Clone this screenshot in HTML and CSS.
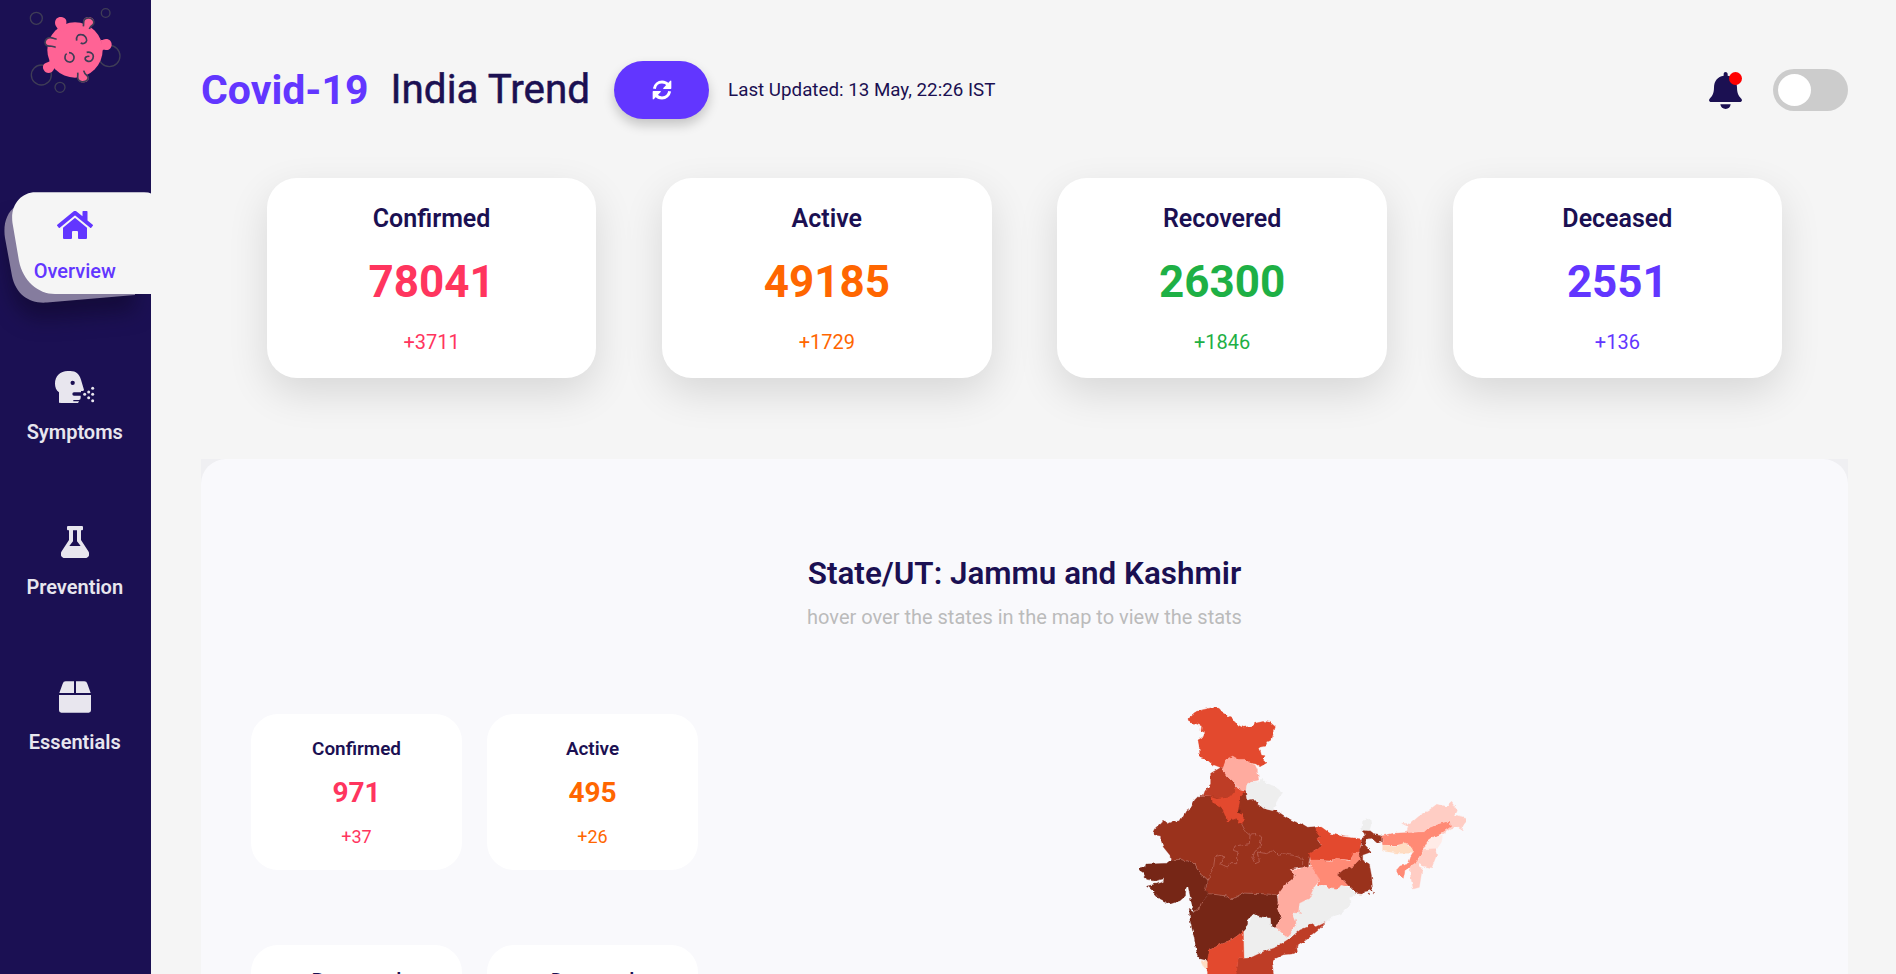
FILE: index.html
```html
<!DOCTYPE html>
<html lang="en">
<head>
<meta charset="utf-8">
<title>Covid-19 India Trend</title>
<link rel="stylesheet" href="styles.css">
</head>
<body>
<div class="app">
  <aside class="sidebar">
    <svg class="logo" viewBox="0 0 453 300" width="151" height="100">
      <g class="ring"><circle cx="109" cy="55" r="18"/><circle cx="317" cy="39" r="13"/><circle cx="328" cy="168" r="32"/><circle cx="124" cy="225" r="30"/><circle cx="180" cy="262" r="15"/></g>
      <g class="virus">
        <circle cx="225" cy="150" r="83"/>
        <path d="M174 88c-2-6-9-10-9-19 0-12 8-19 19-18 11 1 17 9 15 18-1 5 0 8 4 12l-16 14z"/>
        <path d="M250 75c2-8-2-12 3-19 6-7 17-6 24-1 7 6 7 14 1 20-4 4-7 6-9 12z"/>
        <path d="M303 120c6 1 8-3 15-3 11 0 18 8 17 18s-9 17-18 15c-6-1-8-1-13 3z"/>
        <path d="M165 117c-7 0-10-4-17-3-9 1-14 8-13 16 1 7 8 10 14 9 6 0 12 2 17 3z"/>
        <path d="M150 180c-1 6-5 6-11 8-9 3-13 12-8 21 5 10 15 12 24 7 7-4 6-13 12-12z"/>
        <path d="M233 218c2 8-1 12 1 20 3 9 13 11 23 8 9-3 12-13 6-19-6-4-10-7-12-15z"/>
      </g>
      <g class="detail">
        <path d="M250 79c2-8-1-14 3-20 5-7 18-7 24-1 6 5 6 13 1 17-5 3-9 6-10 12"/>
        <path d="M170 117c-9 1-11-5-20-4-8 0-15 7-15 15 1 8 8 11 15 10 6 0 10 2 17 4"/>
        <path d="M233 218c2 9-2 12 1 19 3 9 15 10 22 7 8-3 11-11 6-16-5-4-9-7-11-16"/>
        <path d="M230 122c-2-14 5-19 14-18 10 0 17 10 16 18-2 8-11 11-18 7"/>
        <path d="M207 158c9 0 16 7 15 16-1 8-7 13-14 12-9-1-14-8-13-15 0-5 2-8 5-10"/>
        <path d="M260 157c11-2 20 3 20 12 0 10-8 17-16 15-9-2-11-9-6-13 4-2 8-3 10-1"/>
      </g>
    </svg>
    <nav class="nav">
      <a class="nav-item active">
        <svg class="tab" viewBox="0 180 151 150" width="151" height="150">
          <path class="tab-back" d="M16 206C6 213 3 225 5 238L12 276C16 295 30 304 47 302.500L135 295V206Z"/>
          <path class="tab-front" d="M151 193.500Q149 192.300 144 192.300H36C21 192 10 205 12.500 223L19 261C23 281 38 294 55 294H151Z"/>
        </svg>
        <svg class="nav-icon home" viewBox="0 32 576 448" width="36" height="28"><path d="M280 148L96 300v164a16 16 0 0 0 16 16l112-.3a16 16 0 0 0 16-16V368a16 16 0 0 1 16-16h64a16 16 0 0 1 16 16v95.600a16 16 0 0 0 16 16.100L464 480a16 16 0 0 0 16-16V300L295.700 148.300a12.200 12.200 0 0 0-15.300 0zM571.600 251.500L488 182.600V44a12 12 0 0 0-12-12h-56a12 12 0 0 0-12 12v72.600L318.500 43a48 48 0 0 0-61 0L4.300 251.500a12 12 0 0 0-1.600 16.900l25.500 31A12 12 0 0 0 45.200 301l235.200-193.700a12.200 12.200 0 0 1 15.300 0L530.900 301a12 12 0 0 0 16.900-1.600l25.500-31a12 12 0 0 0-1.700-16.900z"/></svg>
        <span>Overview</span>
      </a>
      <a class="nav-item">
        <svg class="nav-icon" viewBox="0 0 120 96" width="40" height="32"><path fill-rule="evenodd" d="M12 95V64C4 58 0 49 0 38 0 15 16 0 38 0h8c17 0 27 10 32 26l8 27c2 5 0 7-4 7h-4v4H57q-5 0-5 5t5 5h20v7q0 6-6 6H55v4h17q-1 5-7 6H54v4zM53 29a6.500 6.500 0 1 0 0 13 6.500 6.500 0 0 0 0-13z"/><g><circle cx="89" cy="70" r="4.500"/><circle cx="101" cy="63" r="4.500"/><circle cx="101" cy="80" r="4.500"/><circle cx="113" cy="52" r="4.500"/><circle cx="113" cy="70" r="4.500"/><circle cx="113" cy="89" r="4.500"/></g></svg>
        <span>Symptoms</span>
      </a>
      <a class="nav-item">
        <svg class="nav-icon" viewBox="0 0 84 96" width="28" height="32"><path fill-rule="evenodd" d="M21 0h42q3 0 3 3v7q0 3-3 3h-3v29l22 34c6 10 1 20-10 20H12C1 96-4 86 2 76l22-34V13h-3q-3 0-3-3V3q0-3 3-3zM36 13v33L25 60h34L48 46V13z"/></svg>
        <span>Prevention</span>
      </a>
      <a class="nav-item">
        <svg class="nav-icon" viewBox="0 0 96 96" width="32" height="32"><path d="M45 1v35H1L11 8q2-7 9-7zM51 1h25q7 0 9 7l10 28H51zM0 42h96v46q0 7-7 7H7q-7 0-7-7z"/></svg>
        <span>Essentials</span>
      </a>
    </nav>
  </aside>

  <main class="main">
    <header class="header">
      <h1 class="title"><span class="brand">Covid-19</span><span class="country">India Trend</span></h1>
      <button class="refresh" aria-label="Refresh">
        <svg viewBox="0 0 60 60" width="20" height="20"><path class="arc" d="M7 26C9 14 19 6 30 6c8 0 14 3 19 9M53 34C51 46 41 54 30 54c-8 0-14-3-19-9"/><path d="M58 4v21q0 2-2 2H35q-3 0-1-3L54 3q4-3 4 1zM2 56V35q0-2 2-2h21q3 0 1 3L6 57q-4 3-4-1z"/></svg>
      </button>
      <p class="updated">Last Updated: 13 May, 22:26 IST</p>
      <div class="bell">
        <svg viewBox="0 0 99 111" width="33" height="37"><path d="M44 11V5q0-5 5.500-5T56 5v6c18 3 28 16 28 35 0 17 4 26 13 34 4 5 1 10-5 10H7c-6 0-9-5-5-10 9-8 13-17 13-34 0-19 11-32 29-35zM34 97h31c-1 9-7 14-15 14s-15-5-16-14z"/></svg>
        <span class="dot"></span>
      </div>
      <div class="toggle"><span class="knob"></span></div>
    </header>

    <section class="totals">
      <article class="card red"><h2>Confirmed</h2><strong>78041</strong><small>+3711</small></article>
      <article class="card orange"><h2>Active</h2><strong>49185</strong><small>+1729</small></article>
      <article class="card green"><h2>Recovered</h2><strong>26300</strong><small>+1846</small></article>
      <article class="card violet"><h2>Deceased</h2><strong>2551</strong><small>+136</small></article>
    </section>

    <div class="panel-wrap">
    <section class="panel">
      <h2 class="state">State/UT: Jammu and Kashmir</h2>
      <p class="hint">hover over the states in the map to view the stats</p>
      <div class="detail-row">
        <div class="minis">
          <article class="mini red"><h3>Confirmed</h3><strong>971</strong><small>+37</small></article>
          <article class="mini orange"><h3>Active</h3><strong>495</strong><small>+26</small></article>
          <article class="mini green"><h3>Recovered</h3></article>
          <article class="mini violet"><h3>Deceased</h3></article>
        </div>
        <svg class="map" viewBox="0 0 1140 852" width="380" height="284">
          <defs><filter id="coast" x="0" y="0" width="100%" height="100%"><feTurbulence type="fractalNoise" baseFrequency="0.07" numOctaves="2" seed="4"/><feDisplacementMap in="SourceGraphic" scale="11" xChannelSelector="R" yChannelSelector="G"/></filter></defs>
          <g filter="url(#coast)">
          <path class="c6" d="M102 426L107 416 126 398 134 388 143 402 158 395 180 393 198 362 215 350 224 330 238 316 272 318 345 300 380 305 380 330 400 328 415 345 440 358 470 362 490 376 510 388 525 395 545 403 560 412 585 410 595 425 600 440 592 450 607 470 585 480 572 490 568 510 565 532 548 532 510 538 528 556 515 569 495 586 478 611 470 616 425 611 370 609 333 629 320 618 265 611 255 604 265 571 240 551 225 521 185 508 152 510 150 496 130 471 122 446 122 438 102 434Z"/>
          <path class="c7" d="M152 510L185 508 225 521 240 551 265 571 255 604 268 611 245 636 238 655 222 665 215 640 205 592 198 592 196 618 180 632 150 642 120 626 98 602 82 588 105 583 130 575 132 566 105 573 80 568 70 548 58 540 62 532 75 533 78 522 110 521 140 520Z"/>
          <path class="c7" d="M268 611L320 618 333 629 370 609 425 611 470 614 475 640 472 655 484 688 466 710 453 710 451 685 420 680 400 673 383 688 383 705 370 722 355 735 330 753 305 762 268 780 265 812 240 806 232 795 222 740 210 690 208 655 222 665 238 655 245 636Z"/>
          <path class="c0" d="M400 673L420 680 451 685 453 710 466 710 500 742 540 720 480 770 440 780 415 795 372 806 370 775 368 722 383 705Z"/>
          <path class="c0" d="M578 590L605 585 630 595 660 585 685 595 710 612 688 625 690 645 665 670 630 685 612 700 585 705 560 710 510 746 490 752 500 742 522 720 528 705 522 670 535 665 535 640 565 625Z"/>
          <path class="c3" d="M548 533L565 532 575 525 590 550 600 570 582 592 567 625 538 640 535 667 546 670 520 668 528 700 518 722 500 742 466 710 484 688 472 655 475 620 478 608 495 586 515 569 528 556 510 538 540 540Z"/>
          <path class="c5" d="M355 806L390 804 430 785 470 770 510 745 540 720 560 712 575 700 590 710 615 698 595 720 565 745 530 770 532 785 515 792 490 794 465 806 457 826 462 862 345 862Z"/>
          <path class="c4" d="M268 780L305 762 330 753 355 735 370 722 372 806 355 806 348 862 265 862 260 830 262 812Z"/>
          <path class="c8" d="M243 812L262 812 262 838 252 832Z"/>
          <path class="c4" d="M588 408L605 412 630 430 670 440 725 447 722 465 718 485 700 495 690 510 650 505 630 512 572 510 568 490 585 480 607 468 592 448 600 440 588 425Z"/>
          <path class="c2" d="M572 510L590 510 630 515 650 505 690 513 700 492 718 485 722 505 700 530 670 540 652 555 670 570 688 590 660 585 650 598 625 595 620 585 592 585 600 570 588 550 575 530 568 520Z"/>
          <path class="c6" d="M728 420L750 422 760 430 785 435 785 455 772 460 755 445 740 447 735 465 755 485 728 495 728 510 748 522 755 560 757 590 748 602 732 605 725 612 710 610 688 590 670 570 652 555 670 540 700 530 722 505 718 480 725 465 725 445 735 440Z"/>
          <path class="c0" d="M728 392L750 387 753 405 748 422 725 420Z"/>
          <path class="c2" d="M785 438L820 430 855 428 915 425 930 412 960 400 990 392 993 410 965 430 945 440 922 455 905 490 895 505 890 520 875 530 855 540 850 565 835 555 830 540 840 528 865 522 872 502 882 485 865 460 830 465 788 465Z"/>
          <path class="c8" d="M788 465L830 468 855 458 865 465 880 480 880 490 835 490 788 483Z"/>
          <path class="c1" d="M845 400L870 402 895 380 925 362 950 343 980 350 995 337 1012 362 1005 375 1038 383 1038 395 1025 412 1030 420 1015 410 993 415 970 432 965 430 993 410 990 392 960 400 930 412 915 425 860 427 865 410ZM912 480L945 475 950 495 935 533 910 528 892 520 898 502ZM870 530L890 515 898 530 907 535 903 560 898 592 880 597 872 560Z"/>
          <path class="c9" d="M922 455L945 438 967 435 965 455 950 478 910 480Z"/>
          <path class="c4" d="M204 85L225 67 245 60 275 53 297 55 310 70 335 83 347 100 370 112 395 108 405 100 432 94 450 97 466 110 460 130 455 148 440 155 435 168 418 172 424 195 435 197 430 208 441 218 420 230 408 222 375 215 345 205 318 212 310 234 300 232 275 222 265 212 240 203 238 170 234 150 250 140 255 128 243 122 245 108 225 100 210 98Z"/>
          <path class="c5" d="M300 234L310 236 320 258 335 272 350 288 345 302 330 322 290 325 272 318 250 316 255 303 272 282 272 250Z"/>
          <path class="c4" d="M272 320L290 327 330 322 345 303 350 288 360 300 375 305 362 320 357 345 353 365 370 375 370 395 355 400 350 385 335 390 322 395 315 375 303 350 280 338Z"/>
          <path class="c3" d="M318 208L338 198 355 208 378 208 390 220 405 225 412 240 416 270 395 275 380 285 378 303 360 300 350 285 335 272 318 255 308 238Z"/>
          <path class="c0" d="M380 283L395 273 415 275 425 265 440 280 465 290 488 308 475 325 462 350 458 362 430 355 410 335 400 325 382 330 378 310Z"/>
          <path class="c7" d="M350 367L360 359 364 371Z"/>
          <path class="line" d="M365 402L378 426 390 436 400 431 425 441 420 471 405 481 398 506 405 521 418 516 412 486 440 491 460 481 475 496 490 491 520 496 548 506V533M390 436L388 461 345 468 340 481 355 486 350 501V521L330 521 322 531 300 521 315 501 300 496 285 501 280 536 262 571 255 604M152 510L185 508 225 521 240 551 265 571M245 636L238 655 222 665M268 611L320 618 333 629 370 609 425 611 470 614M568 510L565 532 548 532"/>
          <path class="c6" d="M728 605h5v6h-5zM752 600h4v4h-4zM745 609h3v3h-3zM760 609h3v3h-3z"/>
          </g>
        </svg>
      </div>
    </section>
    </div>
  </main>
</div>
</body>
</html>
```
FILE: styles.css
```css
* { box-sizing: border-box; margin: 0; padding: 0; }
html, body { height: 100%; overflow: hidden; }
body { background: #f5f5f5; color: #1b1052; font-family: Roboto, "Liberation Sans", sans-serif; }
.app { display: flex; height: 974px; overflow: hidden; }

/* Sidebar */
.sidebar { flex: none; width: 151px; height: 974px; background: #1b1053; overflow: hidden; }
.logo { display: block; }
.ring { fill: none; stroke: #3f3d56; stroke-width: 4; }
.virus { fill: #ff6395; }
.detail { fill: none; stroke: #3f3d56; stroke-width: 5; }
.nav { display: flex; flex-direction: column; padding-top: 92px; }
.nav-item { position: relative; display: flex; flex-direction: column; align-items: center; gap: 17px; height: 73px; margin-bottom: 82px; padding-right: 1.5px; font-size: 20px; line-height: 24px; font-weight: 600; color: #e8e6ee; }
.nav-icon { flex: none; fill: currentColor; }
.active { height: 102px; padding-top: 19px; gap: 20px; margin-bottom: 77px; font-weight: 500; color: #6236ff; }
.active .nav-icon, .active span { position: relative; }
.tab { position: absolute; left: 0; top: -12px; overflow: visible; }
.tab-back { fill: #857c9e; filter: drop-shadow(0 16px 10px rgba(15, 8, 40, .55)); }
.tab-front { fill: #f5f5f5; }

/* Header */
.main { flex: 1; padding: 61px 48px 0 50px; }
.header { display: flex; align-items: center; height: 58px; }
.title { display: flex; gap: 22px; font-size: 41px; line-height: 48px; white-space: nowrap; }
.title .country { font-size: 40.4px; font-weight: 400; -webkit-text-stroke: 0.5px currentColor; }
.title .brand { color: #6236ff; font-weight: 700; }
.refresh { display: flex; align-items: center; justify-content: center; width: 95px; height: 58px; margin-left: 24px; border: 0; border-radius: 30px; background: #6236ff; box-shadow: 0 6px 12px rgba(0, 0, 0, .2); }
.refresh svg { fill: #fff; }
.refresh .arc { fill: none; stroke: #fff; stroke-width: 9; }
.updated { margin-left: 19px; font-size: 18.75px; line-height: 22px; font-weight: 400; }
.bell { position: relative; width: 33px; height: 37px; margin-left: auto; margin-right: 31px; }
.bell svg { display: block; fill: #1b1052; }
.dot { position: absolute; right: 0; top: 0; width: 13px; height: 13px; border-radius: 50%; background: #f00; }
.toggle { width: 75px; height: 42px; padding: 5px; border-radius: 21px; background: #ccc; }
.knob { display: block; width: 33px; height: 32px; border-radius: 50%; background: #fff; }

/* Country totals */
.totals { display: flex; justify-content: space-evenly; margin-top: 59px; }
.card { display: flex; flex-direction: column; align-items: center; width: 20%; height: 200px; padding-top: 26px; border-radius: 30px; background: #fff; box-shadow: 0 15px 40px rgba(0, 0, 0, .12); }
.card h2 { color: #1b1052; font-size: 25px; line-height: 30px; font-weight: 600; }
.card strong { margin-top: 21px; font-size: 44px; line-height: 54px; font-weight: 700; }
.card small { margin-top: 21px; font-size: 20px; line-height: 24px; font-weight: 400; }
.red { color: #ff355e; }
.orange { color: #ff6600; }
.green { color: #1eb045; }
.violet { color: #6236ff; }

/* State details */
.panel-wrap { margin-top: 81px; background: #efeff2; }
.panel { height: 900px; padding: 96px 50px 0; border-radius: 25px; background: #f9f9fc; text-align: center; }
.state { font-size: 31.4px; line-height: 38px; font-weight: 600; }
.hint { margin-top: 12px; font-size: 20px; line-height: 24px; color: #bbb; }
.detail-row { display: flex; align-items: flex-start; }
.minis { display: grid; grid-template-columns: 211px 211px; gap: 75px 25px; padding-top: 85px; }
.mini { display: flex; flex-direction: column; align-items: center; height: 156px; padding-top: 24px; border-radius: 27px; background: #fff; }
.mini h3 { color: #1b1052; font-size: 18.9px; line-height: 22px; font-weight: 600; }
.mini strong { margin-top: 16px; font-size: 28px; line-height: 34px; font-weight: 700; }
.mini small { margin-top: 16px; font-size: 18px; line-height: 22px; font-weight: 400; }
.map { flex: none; margin: 61px 0 0 422px; }
.map path { stroke-width: 1; }
.c0 { fill: #eee; stroke: #eee; }
.c1 { fill: #ffcdc4; stroke: #ffcdc4; }
.c2 { fill: #ff8a75; stroke: #ff8a75; }
.c3 { fill: #ffab9f; stroke: #ffab9f; }
.c4 { fill: #e34a2e; stroke: #e34a2e; }
.c5 { fill: #be3d27; stroke: #be3d27; }
.c6 { fill: #9a301e; stroke: #9a301e; }
.c7 { fill: #762618; stroke: #762618; }
.c8 { fill: #ffdcc2; stroke: #ffdcc2; }
.c9 { fill: #ffebe7; stroke: #ffebe7; }
.map .line { fill: none; stroke: #c0705f; stroke-width: 2; }
```
